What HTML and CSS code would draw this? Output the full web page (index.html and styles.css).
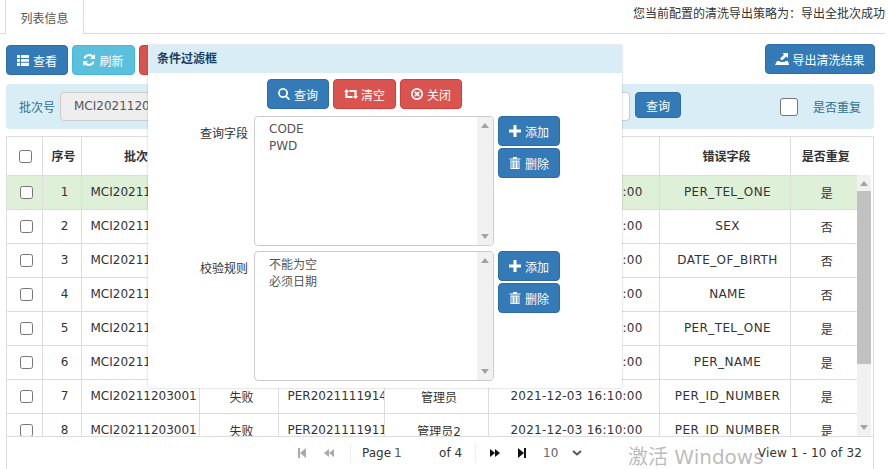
FILE: index.html
```html
<!DOCTYPE html>
<html lang="zh-CN">
<head>
<meta charset="utf-8">
<title>列表信息</title>
<link rel="stylesheet" href="styles.css">
</head>
<body>
<svg class="defs" width="0" height="0" aria-hidden="true">
  <symbol id="i-list" viewBox="0 0 12 12"><path d="M0 1h3v3H0zM4 1h8v3H4zM0 5h3v2.800H0zM4 5h8v2.800H4zM0 8.800h3V12H0zM4 8.800h8V12H4z"/></symbol>
  <symbol id="i-refresh" viewBox="0 0 12 12"><path d="M10.300 1.700 12 0v5H7l1.800-1.800A4 4 0 0 0 2.300 4.700L.5 4A6 6 0 0 1 10.300 1.700zM1.700 10.300 0 12V7h5L3.200 8.800a4 4 0 0 0 6.500-1.500l1.800.7a6 6 0 0 1-9.800 2.300z"/></symbol>
  <symbol id="i-search" viewBox="0 0 12 12"><path d="M5 0a5 5 0 0 1 4 8l3 3-1.300 1.300-3-3A5 5 0 1 1 5 0zm0 1.800a3.200 3.200 0 1 0 0 6.400 3.200 3.200 0 0 0 0-6.400z"/></symbol>
  <symbol id="i-retweet" viewBox="0 0 14 12"><path d="M2.500 1 5 4H3.500v4H8l1.500 2H2a.6.600 0 0 1-.6-.6V4H0zM11.500 11 9 8h1.500V4H6L4.500 2H12a.6.600 0 0 1 .6.600V8H14z"/></symbol>
  <symbol id="i-close" viewBox="0 0 12 12"><path fill-rule="evenodd" d="M6 0a6 6 0 1 1 0 12A6 6 0 0 1 6 0zm0 1.700a4.300 4.300 0 1 0 0 8.600 4.300 4.300 0 0 0 0-8.600zM4.400 3.200 6 4.800l1.600-1.600 1.200 1.200L7.200 6l1.600 1.600-1.200 1.200L6 7.200 4.400 8.800 3.200 7.600 4.800 6 3.200 4.400z"/></symbol>
  <symbol id="i-plus" viewBox="0 0 12 12"><path d="M4.500 0h3v4.500H12v3H7.500V12h-3V7.500H0v-3h4.500z"/></symbol>
  <symbol id="i-trash" viewBox="0 0 12 12"><path d="M4 0h4v1.500h3.500v1H.5v-1H4zM1.500 3.500h9V12h-9zM2.500 4.500V11h1V4.500zM5.500 4.500V11h1V4.500zM8.500 4.500V11h1V4.500z"/></symbol>
  <symbol id="i-export" viewBox="0 0 14 12"><path d="M7.500 0 13 .0V5L11.200 3.500 7 7.500 5 5.500 9 1.800zM2 8h2.500l1 1h4l1-1H13l1 4H0z"/></symbol>
  <symbol id="i-first" viewBox="0 0 10 10"><path d="M1 0h2v10H1zM9 0v10L3 5z"/></symbol>
  <symbol id="i-prev" viewBox="0 0 10 10"><path d="M5 1v8L0 5zM10 1v8L5 5z"/></symbol>
  <symbol id="i-next" viewBox="0 0 10 10"><path d="M0 1v8l5-4zM5 1v8l5-4z"/></symbol>
  <symbol id="i-last" viewBox="0 0 10 10"><path d="M1 0v10l6-5zM7 0h2v10H7z"/></symbol>
</svg>

<div class="page">
  <header class="tabs">
    <div class="tab">列表信息</div>
    <div class="notice">您当前配置的清洗导出策略为：导出全批次成功</div>
  </header>

  <div class="toolbar">
    <button class="btn blue"><svg class="ic"><use href="#i-list"/></svg>查看</button>
    <button class="btn cyan"><svg class="ic"><use href="#i-refresh"/></svg>刷新</button>
    <button class="btn red"><svg class="ic"><use href="#i-close"/></svg>条件</button>
    <button class="btn blue export"><svg class="ic wide"><use href="#i-export"/></svg>导出清洗结果</button>
  </div>

  <div class="search">
    <span class="search-label">批次号</span>
    <div class="field readonly">MCI20211203001</div>
    <div class="field plain"></div>
    <button class="btn blue small">查询</button>
    <span class="check big"></span>
    <span class="repeat">是否重复</span>
  </div>

  <section class="grid">
    <div class="grid-main">
      <table class="data">
        <colgroup>
          <col class="c1"><col class="c2"><col class="c3"><col class="c4"><col class="c5"><col class="c6"><col class="c7"><col class="c8"><col class="c9">
        </colgroup>
        <thead>
          <tr><th><span class="check"></span></th><th>序号</th><th>批次号</th><th>状态</th><th>人员编号</th><th>操作人</th><th>操作时间</th><th>错误字段</th><th>是否重复</th></tr>
        </thead>
        <tbody>
          <tr class="active"><td><span class="check"></span></td><td>1</td><td class="left">MCI20211203001</td><td>失败</td><td class="left">PER2021111901</td><td>管理员</td><td>2021-12-03 16:10:00</td><td>PER_TEL_ONE</td><td>是</td></tr>
          <tr><td><span class="check"></span></td><td>2</td><td class="left">MCI20211203001</td><td>失败</td><td class="left">PER2021111902</td><td>管理员</td><td>2021-12-03 16:10:00</td><td>SEX</td><td>否</td></tr>
          <tr><td><span class="check"></span></td><td>3</td><td class="left">MCI20211203001</td><td>失败</td><td class="left">PER2021111903</td><td>管理员</td><td>2021-12-03 16:10:00</td><td>DATE_OF_BIRTH</td><td>否</td></tr>
          <tr><td><span class="check"></span></td><td>4</td><td class="left">MCI20211203001</td><td>失败</td><td class="left">PER2021111904</td><td>管理员</td><td>2021-12-03 16:10:00</td><td>NAME</td><td>否</td></tr>
          <tr><td><span class="check"></span></td><td>5</td><td class="left">MCI20211203001</td><td>失败</td><td class="left">PER2021111905</td><td>管理员</td><td>2021-12-03 16:10:00</td><td>PER_TEL_ONE</td><td>是</td></tr>
          <tr><td><span class="check"></span></td><td>6</td><td class="left">MCI20211203001</td><td>失败</td><td class="left">PER2021111906</td><td>管理员</td><td>2021-12-03 16:10:00</td><td>PER_NAME</td><td>是</td></tr>
          <tr><td><span class="check"></span></td><td>7</td><td class="left">MCI20211203001</td><td>失败</td><td class="left">PER20211119141</td><td>管理员</td><td>2021-12-03 16:10:00</td><td>PER_ID_NUMBER</td><td>是</td></tr>
          <tr><td><span class="check"></span></td><td>8</td><td class="left">MCI20211203001</td><td>失败</td><td class="left">PER20211119111</td><td>管理员2</td><td>2021-12-03 16:10:00</td><td>PER_ID_NUMBER</td><td>是</td></tr>
        </tbody>
      </table>
      <div class="grid-scroll">
        <div class="track">
          <span class="arrow up"></span>
          <span class="thumb"></span>
          <span class="arrow down"></span>
        </div>
      </div>
    </div>
    <footer class="pager">
      <svg class="pg off first"><use href="#i-first"/></svg>
      <svg class="pg off prev"><use href="#i-prev"/></svg>
      <span class="sep sep-a"></span>
      <span class="pg-label">Page</span>
      <span class="pg-input">1</span>
      <span class="pg-of">of 4</span>
      <span class="sep sep-b"></span>
      <svg class="pg next"><use href="#i-next"/></svg>
      <svg class="pg last"><use href="#i-last"/></svg>
      <span class="pg-size">10<svg class="chev" viewBox="0 0 10 6"><path d="M1 1l4 3.500L9 1" fill="none" stroke="currentColor" stroke-width="2"/></svg></span>
      <span class="pg-view">View 1 - 10 of 32</span>
    </footer>
  </section>

  <aside class="modal">
    <h2 class="modal-title">条件过滤框</h2>
    <div class="modal-actions">
      <button class="btn blue"><svg class="ic"><use href="#i-search"/></svg>查询</button>
      <button class="btn red tight"><svg class="ic wide"><use href="#i-retweet"/></svg>清空</button>
      <button class="btn red"><svg class="ic"><use href="#i-close"/></svg>关闭</button>
    </div>
    <div class="form-row">
      <label class="form-label">查询字段</label>
      <div class="listbox">
        <div class="list-text"><div>CODE</div><div>PWD</div></div>
        <div class="list-scroll"><span class="arrow up"></span><span class="arrow down"></span></div>
      </div>
      <div class="side-actions">
        <button class="btn blue"><svg class="ic"><use href="#i-plus"/></svg>添加</button>
        <button class="btn blue"><svg class="ic"><use href="#i-trash"/></svg>删除</button>
      </div>
    </div>
    <div class="form-row">
      <label class="form-label">校验规则</label>
      <div class="listbox">
        <div class="list-text cjk"><div>不能为空</div><div>必须日期</div></div>
        <div class="list-scroll"><span class="arrow up"></span><span class="arrow down"></span></div>
      </div>
      <div class="side-actions">
        <button class="btn blue"><svg class="ic"><use href="#i-plus"/></svg>添加</button>
        <button class="btn blue"><svg class="ic"><use href="#i-trash"/></svg>删除</button>
      </div>
    </div>
  </aside>

  <div class="watermark">激活 Windows</div>
</div>
</body>
</html>
```

FILE: styles.css
```css
* { box-sizing: border-box; }
html, body { margin: 0; padding: 0; background: #fff; }
body {
  font-family: "DejaVu Sans", "Noto Sans CJK SC", sans-serif;
  font-size: 12px;
  color: #333;
}
.defs { position: absolute; }
.page { position: relative; width: 889px; height: 469px; overflow: hidden; }

.tabs {
  display: flex;
  width: 885px;
  height: 34px;
  border-bottom: 1px solid #ddd;
}
.tab {
  width: 79px;
  height: 34px;
  margin-left: 5px;
  padding-top: 9px;
  text-align: center;
  color: #555;
  background: #fff;
  border: 1px solid #ddd;
  border-top: 0;
  border-bottom: 0;
}
.notice { margin-left: auto; padding-top: 4px; color: #333; }

.btn {
  display: inline-flex;
  align-items: center;
  justify-content: center;
  gap: 4px;
  width: 62px;
  height: 30px;
  padding: 0;
  font: inherit;
  color: #fff;
  border: 1px solid transparent;
  border-radius: 4px;
}
.btn.tight { gap: 3px; }
.blue { background: #337ab7; border-color: #2e6da4; }
.cyan { background: #5bc0de; border-color: #46b8da; }
.red { background: #d9534f; border-color: #d43f3a; }
.ic { width: 12px; height: 12px; fill: currentColor; flex: none; }
.ic.wide { width: 14px; }

.toolbar {
  display: flex;
  gap: 4px;
  height: 30px;
  margin-top: 11px;
  padding: 0 14px 0 6px;
}
.toolbar .cyan { width: 63px; }
.toolbar .export { width: 110px; margin: -1px 0 0 auto; gap: 3px; }

.search {
  display: flex;
  align-items: center;
  width: 868px;
  height: 45px;
  margin: 9px 0 0 6px;
  background: #d9edf7;
  border-radius: 4px;
  color: #31708f;
}
.search-label { margin-left: 13px; width: 41px; }
.field {
  height: 29px;
  padding: 0 13px;
  line-height: 27px;
  border: 1px solid #ccc;
  border-radius: 4px;
  color: #555;
}
.readonly { width: 270px; background: #eee; }
.plain { width: 300px; background: #fff; }
.btn.small { width: 46px; height: 26px; margin: -3px 0 0 5px; }
.check {
  display: inline-block;
  width: 13px;
  height: 13px;
  vertical-align: middle;
  background: #fff;
  border: 1px solid #767676;
  border-radius: 2.500px;
}
.check.big { width: 18px; height: 18px; margin-left: 99px; border-radius: 3px; }
.repeat { margin-left: 15px; }

.grid {
  width: 868px;
  height: 333px;
  margin: 7px 0 0 6px;
  border: 1px solid #ddd;
  border-width: 1px 1px 0;
}
.grid-main {
  display: flex;
  height: 300px;
  overflow: hidden;
  border-bottom: 1px solid #ddd;
}
.data {
  width: 850px;
  flex: none;
  table-layout: fixed;
  border-collapse: collapse;
  align-self: flex-start;
}
.c1 { width: 35px; }
.c2 { width: 39px; }
.c3 { width: 118px; }
.c4 { width: 79px; }
.c5 { width: 106px; }
.c6 { width: 104px; }
.c7 { width: 171px; }
.c8 { width: 131px; }
.c9 { width: 67px; }
.data th, .data td {
  text-align: center;
  white-space: nowrap;
  overflow: hidden;
  border: 1px solid #ddd;
}
.data th {
  height: 38px;
  padding: 0 0 0 4px;
  border-top: 0;
  font-weight: 700;
  color: #333;
}
.data td { height: 34px; padding: 0 0 0 6px; }
.data th:first-child { padding-left: 2px; }
.data td:first-child { padding-left: 4px; }
.data td:nth-child(7) { letter-spacing: .25px; }
.data td:nth-child(8) { letter-spacing: .4px; }
.data tr > :first-child { border-left: 0; }
.data tr > :last-child { border-right: 0; }
.data td.left { text-align: left; padding-left: 9px; }
.data .active td { background: #dff0d8; }

.grid-scroll { flex: 1; padding: 38px 2px 0 0; }
.track {
  display: flex;
  flex-direction: column;
  align-items: center;
  width: 14px;
  height: 261px;
  background: #f1f1f1;
}
.thumb { width: 14px; height: 173px; margin-top: 5px; background: #c1c1c1; }
.arrow { width: 0; height: 0; border: 4px solid transparent; }
.arrow.up { border-bottom: 5px solid #a3a3a3; border-top: 0; margin-top: 6px; }
.arrow.down { border-top: 5px solid #a3a3a3; border-bottom: 0; margin-top: auto; margin-bottom: 6px; }

.pager {
  display: flex;
  align-items: center;
  height: 32px;
  color: #333;
}
.pg { width: 10px; height: 10px; fill: #111; flex: none; }
.pg.off { fill: #aaa; }
.first { margin-left: 290px; }
.prev { margin-left: 17px; }
.sep { width: 1px; height: 20px; background: #eee; }
.sep-a { margin-left: 16px; }
.pg-label { margin-left: 11px; }
.pg-input { width: 39px; margin-left: 3px; color: #555; }
.pg-of { margin-left: 6px; }
.sep-b { margin-left: 13px; }
.next { margin-left: 14px; }
.last { margin-left: 17px; }
.pg-size { display: flex; align-items: center; margin-left: 16px; color: #666; }
.chev { width: 10px; height: 6px; margin-left: 14px; color: #555; }
.pg-view { margin-left: auto; margin-right: 11px; letter-spacing: .15px; }

.modal {
  position: absolute;
  left: 148px;
  top: 45px;
  width: 474px;
  height: 343px;
  background: #fff;
  box-shadow: 0 0 2px rgba(0, 0, 0, .25);
}
.modal-title {
  height: 28px;
  margin: 0;
  padding: 1px 0 0 9px;
  font-size: 12px;
  line-height: 27px;
  font-weight: 700;
  color: #1d3c5e;
  background: #d9edf7;
}
.modal-actions {
  display: flex;
  gap: 4px;
  margin: 6px 0 0 119px;
}
.modal-actions .btn:nth-child(2) { width: 63px; }
.form-row { display: flex; margin-top: 5px; height: 130px; }
.modal-actions + .form-row { margin-top: 7px; }
.form-label {
  width: 100px;
  padding-top: 8px;
  text-align: right;
  color: #333;
}
.listbox {
  display: flex;
  width: 240px;
  height: 130px;
  margin-left: 6px;
  background: #fff;
  border: 1px solid #ccc;
  border-radius: 4px;
  overflow: hidden;
}
.list-text {
  flex: 1;
  padding: 4px 0 0 14px;
  line-height: 16.500px;
  color: #555;
}
.list-text.cjk { padding-top: 5px; }
.list-scroll {
  display: flex;
  flex-direction: column;
  align-items: center;
  width: 16px;
  background: #f1f1f1;
}
.side-actions {
  display: flex;
  flex-direction: column;
  gap: 2px;
  margin-left: 4px;
}
.watermark {
  position: absolute;
  left: 628px;
  top: 445px;
  font-size: 20px;
  line-height: 24px;
  color: rgba(120, 120, 120, .5);
  white-space: nowrap;
}
```
